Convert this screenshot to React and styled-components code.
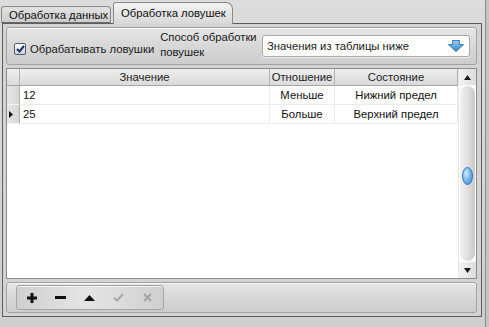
import React from 'react';
import styled, { createGlobalStyle } from 'styled-components';

const Global = createGlobalStyle`
  html, body { margin: 0; padding: 0; }
  body { font-family: "Liberation Sans", Arial, sans-serif; font-size: 11.3px; color: #1a1a1a; }
`;

const Window = styled.div`
  width: 489px;
  height: 327px;
  box-sizing: border-box;
  background: linear-gradient(180deg, #dcdcdc 0%, #cfcfcf 100%);
  box-shadow: inset -3px 0 0 #c4c4c4, inset -4px 0 0 #8e8e8e;
  overflow: hidden;
`;

const TabStrip = styled.div`
  height: 23px;
  display: flex;
  align-items: flex-end;
  padding-left: 1px;
`;

const Tab = styled.div`
  position: relative;
  box-sizing: border-box;
  height: ${p => (p.$active ? '22px' : '17px')};
  width: ${p => p.$w}px;
  margin-left: ${p => (p.$active ? '2px' : '0')};
  margin-bottom: ${p => (p.$active ? '-1px' : '0')};
  padding: ${p => (p.$active ? '4px 0 0 7px' : '2px 0 0 7px')};
  border: 1px solid #8a8a8a;
  border-bottom: ${p => (p.$active ? 'none' : '1px solid #6a6a6a')};
  border-radius: 3px ${p => (p.$active ? '7px' : '4px')} 0 0;
  background: ${p =>
    p.$active
      ? 'linear-gradient(180deg, #f4f4f4 0%, #e2e2e2 60%, #d8d8d8 100%)'
      : 'linear-gradient(180deg, #e2e2e2 0%, #cdcdcd 100%)'};
  color: #111;
  white-space: nowrap;
  z-index: ${p => (p.$active ? 2 : 1)};
`;

const Page = styled.div`
  margin-left: 2px;
  width: 480px;
  height: 294px;
  box-sizing: border-box;
  border: 1px solid #5e5e5e;
  padding: 3px 4px 2px 3px;
  display: flex;
  flex-direction: column;
  gap: 3px;
  background: #d3d3d3;
`;

const Panel = styled.div`
  box-sizing: border-box;
  height: ${p => p.$h}px;
  border: 1px solid #a2a2a2;
  border-radius: 3px;
  background: linear-gradient(180deg, #e6e6e6 0%, #d9d9d9 45%, #cdcdcd 100%);
  box-shadow: inset 0 1px 0 #f6f6f6;
  display: flex;
  align-items: center;
`;

const SettingsPanel = styled(Panel)`
  padding: 0 6px 0 7px;
`;

const CheckLabel = styled.label`
  display: flex;
  align-items: center;
  gap: 4px;
  margin-top: 6px;
  white-space: nowrap;
`;

const Box = styled.span`
  width: 12px;
  height: 12px;
  box-sizing: border-box;
  border: 1px solid #4c5c70;
  border-radius: 2px;
  background: linear-gradient(180deg, #ffffff, #c8d2dc);
  display: flex;
  align-items: center;
  justify-content: center;
`;

const ModeLabel = styled.div`
  margin-left: 6px;
  line-height: 15px;
  white-space: nowrap;
  margin-top: -3px;
`;

const Combo = styled.div`
  margin-left: auto;
  width: 208px;
  height: 22px;
  box-sizing: border-box;
  border: 1px solid #a8a8a8;
  border-radius: 3px;
  background: #fff;
  box-shadow: 0 1px 0 #eeeeee;
  display: flex;
  align-items: center;
  padding: 0 5px 0 4px;
  justify-content: space-between;
`;

const Grid = styled.div`
  height: 211px;
  box-sizing: border-box;
  border: 1px solid #8c8c8c;
  background: #fff;
  display: flex;
`;

const Table = styled.div`
  flex: 1;
  display: grid;
  grid-template-columns: 13px 250px 65px 1fr;
  grid-auto-rows: 19px;
  grid-template-rows: 17px;
  align-content: start;
`;

const HeadCell = styled.div`
  box-sizing: border-box;
  background: linear-gradient(180deg, #eeeeee 0%, #dadada 100%);
  border-right: 1px solid #b2b2b2;
  border-bottom: 1px solid #a6a6a6;
  display: flex;
  align-items: center;
  justify-content: center;
  color: #222;
`;

const RowHead = styled.div`
  box-sizing: border-box;
  background: linear-gradient(90deg, #e6e6e6, #d6d6d6);
  border-right: 1px solid #b2b2b2;
  border-bottom: 1px solid #f2f2f2;
  display: flex;
  align-items: center;
  padding-left: 2px;
`;

const Cell = styled.div`
  box-sizing: border-box;
  border-right: 1px solid #ececec;
  border-bottom: 1px solid #ececec;
  display: flex;
  align-items: center;
  justify-content: ${p => (p.$left ? 'flex-start' : 'center')};
  padding-left: ${p => (p.$left ? '3px' : '0')};
  color: #111;
`;

const ScrollBar = styled.div`
  width: 17px;
  display: flex;
  flex-direction: column;
  align-items: center;
  background: #fff;
  border-left: 1px solid #e6e6e6;
`;

const ScrollBtn = styled.div`
  height: 16px;
  width: 100%;
  display: flex;
  align-items: center;
  justify-content: center;
  background: linear-gradient(90deg, #f4f4f4, #dcdcdc);
`;

const Track = styled.div`
  flex: 1;
  width: 15px;
  border-radius: 8px;
  background: linear-gradient(90deg, #f2f2f2 0%, #e0e0e0 50%, #c8c8c8 100%);
  display: flex;
  align-items: center;
  justify-content: center;
  margin: 1px 0;
`;

const Thumb = styled.div`
  width: 9px;
  height: 16px;
  border-radius: 50%;
  border: 1px solid #3a78b8;
  background: radial-gradient(ellipse at 35% 35%, #d8ecff 0%, #7ab8ee 45%, #2f7fcf 100%);
  margin-top: 4px;
`;

const ToolbarPanel = styled(Panel)`
  padding: 0 9px;
`;

const ButtonGroup = styled.div`
  width: 148px;
  height: 25px;
  box-sizing: border-box;
  border: 1px solid #a4a4a4;
  border-radius: 3px;
  background: linear-gradient(90deg, #cfcfcf 0%, #e4e4e4 45%, #dcdcdc 70%, #cfcfcf 100%);
  box-shadow: inset 0 1px 0 #f2f2f2;
  display: flex;
  align-items: center;
`;

const ToolButton = styled.div`
  width: 29px;
  height: 100%;
  display: flex;
  align-items: center;
  justify-content: center;
`;

const Arrow = ({ up }) => (
  <svg width="7" height="5" viewBox="0 0 7 5">
    <path d={up ? 'M3.5 0 L7 5 H0 Z' : 'M0 0 H7 L3.5 5 Z'} fill="#1a1a1a" />
  </svg>
);

const DropIcon = () => (
  <svg width="16" height="12" viewBox="0 0 16 12">
    <defs>
      <linearGradient id="dg" x1="0" y1="0" x2="0" y2="1">
        <stop offset="0" stopColor="#9fd0f4" />
        <stop offset="1" stopColor="#2d7fc4" />
      </linearGradient>
    </defs>
    <path d="M4.5 0.5 H11.5 V4.5 H15.5 L8 11.5 L0.5 4.5 H4.5 Z" fill="url(#dg)" stroke="#3a7fb8" strokeWidth="1" />
  </svg>
);

const rows = [
  { value: '12', rel: 'Меньше', state: 'Нижний предел', current: false },
  { value: '25', rel: 'Больше', state: 'Верхний предел', current: true },
];

export default function App() {
  return (
    <Window>
      <Global />
      <TabStrip>
        <Tab $w={110}>Обработка данных</Tab>
        <Tab $w={120} $active>Обработка ловушек</Tab>
      </TabStrip>
      <Page>
        <SettingsPanel $h={38}>
          <CheckLabel>
            <Box>
              <svg width="9" height="8" viewBox="0 0 9 8">
                <path d="M1 4 L3.5 6.5 L8 1" fill="none" stroke="#1f2f5a" strokeWidth="2" />
              </svg>
            </Box>
            Обрабатывать ловушки
          </CheckLabel>
          <ModeLabel>Способ обработки<br />повушек</ModeLabel>
          <Combo>
            <span>Значения из таблицы ниже</span>
            <DropIcon />
          </Combo>
        </SettingsPanel>

        <Grid>
          <Table>
            <HeadCell />
            <HeadCell>Значение</HeadCell>
            <HeadCell>Отношение</HeadCell>
            <HeadCell>Состояние</HeadCell>
            {rows.map(r => (
              <React.Fragment key={r.value}>
                <RowHead>
                  {r.current && (
                    <svg width="4" height="7" viewBox="0 0 4 7">
                      <path d="M0 0 L4 3.5 L0 7 Z" fill="#111" />
                    </svg>
                  )}
                </RowHead>
                <Cell $left>{r.value}</Cell>
                <Cell>{r.rel}</Cell>
                <Cell>{r.state}</Cell>
              </React.Fragment>
            ))}
          </Table>
          <ScrollBar>
            <ScrollBtn><Arrow up /></ScrollBtn>
            <Track><Thumb /></Track>
            <ScrollBtn><Arrow /></ScrollBtn>
          </ScrollBar>
        </Grid>

        <ToolbarPanel $h={31}>
          <ButtonGroup>
            <ToolButton>
              <svg width="10" height="10" viewBox="0 0 10 10">
                <path d="M3.5 0 H6.5 V3.5 H10 V6.5 H6.5 V10 H3.5 V6.5 H0 V3.5 H3.5 Z" fill="#111" />
              </svg>
            </ToolButton>
            <ToolButton>
              <svg width="11" height="3" viewBox="0 0 11 3">
                <rect width="11" height="3" fill="#111" />
              </svg>
            </ToolButton>
            <ToolButton>
              <svg width="11" height="6" viewBox="0 0 11 6">
                <path d="M5.5 0 L11 6 H0 Z" fill="#111" />
              </svg>
            </ToolButton>
            <ToolButton>
              <svg width="11" height="9" viewBox="0 0 11 9">
                <path d="M1 4.5 L4 7.5 L10 1" fill="none" stroke="#a8a8a8" strokeWidth="2" />
              </svg>
            </ToolButton>
            <ToolButton>
              <svg width="9" height="9" viewBox="0 0 9 9">
                <path d="M1 1 L8 8 M8 1 L1 8" stroke="#a4a4a4" strokeWidth="2" />
              </svg>
            </ToolButton>
          </ButtonGroup>
        </ToolbarPanel>
      </Page>
    </Window>
  );
}
